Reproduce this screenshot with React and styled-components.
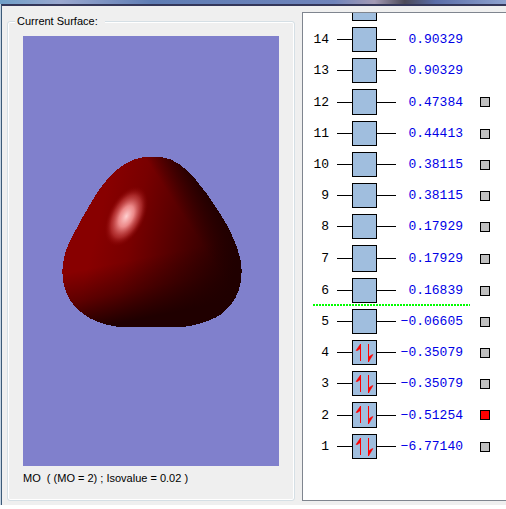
import React, { useState } from "react";
import styled, { createGlobalStyle } from "styled-components";

const GlobalStyle = createGlobalStyle`
  * {
    box-sizing: border-box;
  }
  body {
    margin: 0;
    background: #fff;
    color: #000;
    font-family: "Liberation Sans", Arial, sans-serif;
    font-size: 11px;
  }
`;

const Desktop = styled.div`
  padding: 4px 0 0 1px;
  background: linear-gradient(
        90deg,
        #6f9fc8 0,
        #9aa8cf 12%,
        #5f7db4 30%,
        #6f84bb 66%,
        #a39ab4 74%,
        #4c4a58 80%,
        #5a6da8 86%,
        #8fa3cf 100%
      )
      top / 100% 4px no-repeat,
    #c3d3e2;
`;

const Window = styled.main`
  display: flex;
  gap: 7px;
  padding: 6px 0 4px 5px;
  background: #efefef;
  border-top: 2px solid #34375a;
  border-left: 1px solid #3c5a78;
`;

const SurfaceGroup = styled.fieldset`
  flex: 0 1 288px;
  min-width: 0;
  margin: 0;
  padding: 6px 15px 13px;
  border: 1px solid #d5dfe5;
  border-radius: 3px;
  box-shadow: inset 0 0 0 1px #fff;
`;

const GroupTitle = styled.legend`
  margin-left: -8px;
  padding: 0 7px 0 2px;
  background: #efefef;
  line-height: 18px;
`;

const Viewport = styled.div`
  height: 430px;
  background: #8080cc;
`;

const Surface = styled.svg`
  display: block;
  width: 100%;
  height: 100%;
`;

const Caption = styled.p`
  margin: 3px 0 0;
  line-height: 18px;
  white-space: pre;
`;

const OrbitalPanel = styled.section`
  flex: 1;
  min-width: 0;
  overflow: hidden;
  background: #fff;
  border: 1px solid #7f858f;
  border-right: 0;
`;

const Level = styled.label`
  display: grid;
  grid-template-columns: 26px 8px 15px 25px 19px 67px 17px 10px;
  grid-template-rows: 100%;
  align-items: center;
  height: ${({ $height }) => $height || 31}px;
  font-family: "Liberation Mono", "Courier New", monospace;
  font-size: 13px;
`;

const CutLevel = styled(Level)`
  height: 11px;
`;

const Index = styled.span`
  grid-column: 1;
  text-align: right;
`;

const Stub = styled.span`
  grid-column: ${({ $column }) => $column};
  height: 1px;
  background: #000;
`;

const Box = styled.span`
  display: flex;
  grid-column: 4;
  align-self: stretch;
  margin: 3px 0;
  background: #a0bede;
  border: 1px solid #000;
`;

const CutBox = styled(Box)`
  margin-top: 0;
  border-top: 0;
`;

const Energy = styled.span`
  grid-column: 6;
  color: #0000e6;
  text-align: right;
`;

const Toggle = styled.input`
  grid-column: 8;
  appearance: none;
  width: 10px;
  height: 10px;
  margin: 0;
  background: #c0c0c0;
  border: 1px solid #000;
  &:checked {
    background: #f00;
  }
`;

// line between the occupied and the virtual orbitals
const FermiLine = styled.hr`
  width: 157px;
  height: 2px;
  margin: -2px 0 0 10px;
  border: 0;
  background: repeating-linear-gradient(90deg, #0f0 0 2px, #fff 2px 3px);
`;

const levels = [
  { id: 14, energy: "0.90329" },
  { id: 13, energy: "0.90329" },
  { id: 12, energy: "0.47384", surface: true, height: 32 },
  { id: 11, energy: "0.44413", surface: true },
  { id: 10, energy: "0.38115", surface: true },
  { id: 9, energy: "0.38115", surface: true },
  { id: 8, energy: "0.17929", surface: true },
  { id: 7, energy: "0.17929", surface: true, height: 33 },
  { id: 6, energy: "0.16839", surface: true, lumo: true },
  { id: 5, energy: "−0.06605", surface: true },
  { id: 4, energy: "−0.35079", surface: true, filled: true },
  { id: 3, energy: "−0.35079", surface: true, filled: true },
  { id: 2, energy: "−0.51254", surface: true, filled: true, height: 32 },
  { id: 1, energy: "−6.77140", surface: true, filled: true },
];

function SpinPair() {
  return (
    <svg width="23" height="23" viewBox="0 0 23 23" aria-hidden="true">
      <path d="M7 3h1v17H7zM15 3h1v18h-1z" fill="#f00" shapeRendering="crispEdges" />
      <path
        d="M7.500 3L3 9.500L4.500 9.500L7.500 7.500ZM15.500 21L20 13.500L18.500 14L15.500 16Z"
        fill="#f00"
        stroke="#f00"
        strokeWidth="0.500"
      />
    </svg>
  );
}

function Isosurface() {
  const outline =
    "M280 36H335C375 42 405 68 430 95C460 130 487 168 510 205C532 240 548 272 560 305C570 335 575 355 575 380C574 420 564 452 545 475C530 495 515 508 498 517C465 533 425 546 380 547H230C190 547 150 535 120 520C92 503 76 488 62 468C46 442 38 418 37 380C38 345 46 315 62 284C82 244 102 208 125 170C142 142 158 118 180 94C210 62 240 44 280 36Z";

  return (
    <Surface viewBox="-81 -327 768 1290" role="img" aria-label="Orbital isosurface">
      <defs>
        <linearGradient id="body" gradientUnits="userSpaceOnUse" x1="150" y1="210" x2="570" y2="310">
          <stop offset="0" stopColor="#880000" />
          <stop offset="0.250" stopColor="#780000" />
          <stop offset="0.500" stopColor="#5a0000" />
          <stop offset="0.850" stopColor="#300000" />
          <stop offset="1" stopColor="#200000" />
        </linearGradient>
        <linearGradient id="underside" gradientUnits="userSpaceOnUse" x1="270" y1="340" x2="305" y2="515">
          <stop offset="0" stopColor="#200000" stopOpacity="0" />
          <stop offset="0.500" stopColor="#200000" stopOpacity="0.400" />
          <stop offset="1" stopColor="#200000" />
        </linearGradient>
        <linearGradient id="edge" gradientUnits="userSpaceOnUse" x1="385" y1="190" x2="460" y2="141">
          <stop offset="0" stopColor="#200000" stopOpacity="0" />
          <stop offset="1" stopColor="#200000" stopOpacity="0.900" />
        </linearGradient>
        <radialGradient id="shine">
          <stop offset="0" stopColor="#ffd0d0" />
          <stop offset="0.350" stopColor="#ffa0a0" stopOpacity="0.850" />
          <stop offset="0.700" stopColor="#e05858" stopOpacity="0.450" />
          <stop offset="1" stopColor="#900000" stopOpacity="0" />
        </radialGradient>
      </defs>
      <path d={outline} fill="url(#body)" shapeRendering="crispEdges" />
      <path d={outline} fill="url(#underside)" shapeRendering="crispEdges" />
      <path d={outline} fill="url(#edge)" shapeRendering="crispEdges" />
      <ellipse cx="229" cy="214" rx="54" ry="98" transform="rotate(27 229 214)" fill="url(#shine)" />
    </Surface>
  );
}

export default function App() {
  const [selected, setSelected] = useState(2);

  return (
    <>
      <GlobalStyle />
      <Desktop>
        <Window>
          <SurfaceGroup>
            <GroupTitle>Current Surface:</GroupTitle>
            <Viewport>
              <Isosurface />
            </Viewport>
            <Caption>{`MO  ( (MO = ${selected}) ; Isovalue = 0.02 )`}</Caption>
          </SurfaceGroup>
          <OrbitalPanel>
            <CutLevel as="div">
              <CutBox />
            </CutLevel>
            {levels.map(({ id, energy, surface, filled, lumo, height }) => (
              <React.Fragment key={id}>
                <Level $height={height}>
                  <Index>{id}</Index>
                  <Stub $column={3} />
                  <Box>{filled && <SpinPair />}</Box>
                  <Stub $column={5} />
                  <Energy>{energy}</Energy>
                  {surface && (
                    <Toggle
                      type="checkbox"
                      checked={selected === id}
                      onChange={() => setSelected(id)}
                    />
                  )}
                </Level>
                {lumo && <FermiLine />}
              </React.Fragment>
            ))}
          </OrbitalPanel>
        </Window>
      </Desktop>
    </>
  );
}
